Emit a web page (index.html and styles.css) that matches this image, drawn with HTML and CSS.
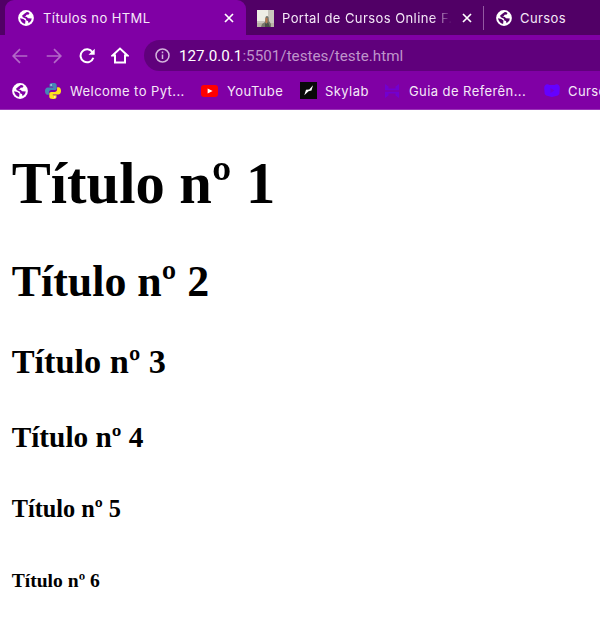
FILE: index.html
```
<!DOCTYPE html>
<html lang="pt-BR">
<head>
<meta charset="utf-8">
<title>Títulos no HTML</title>
<link rel="stylesheet" href="styles.css">
</head>
<body>
<svg class="defs" width="0" height="0" aria-hidden="true">
  <symbol id="globe" viewBox="0 0 16 16">
    <circle cx="8" cy="8" r="7.9" fill="#fff"/>
    <path d="M8.800 2.100Q10 1.900 11.500 2.900L10.800 4.500 8.600 4.700 7.800 6 6.300 6.300 8.800 6.900 10 8.200 13.800 8.400Q13.600 11.500 10.600 13.200L10 11 8.400 10.500 7.900 8.700 4.800 7.300 4 5.700 6.300 3.800zM2 8.300 5.300 8.900 7.500 10.600 7.100 13.900Q2.800 13 2 8.300z" fill="currentColor"/>
  </symbol>
</svg>
<header class="browser">
  <div class="tabs">
    <div class="edge"></div>
    <div class="tab active">
      <svg class="globe"><use href="#globe"/></svg>
      <span class="label title-one">Títulos no HTML</span>
      <svg class="close" viewBox="0 0 10 10"><path d="m1 1 8 8m0-8-8 8"/></svg>
    </div>
    <div class="tab portal">
      <svg class="photo" viewBox="0 0 17 17"><path fill="#c9c6bd" d="M0 0h17v17H0z"/><path fill="#eeeee5" d="M0 0h11v11H0z"/><path fill="#b9b3a6" d="M0 13h17v4H0z"/><path fill="#77766b" d="m4 17 1-3 3-2 .5-5q1.500-2 3 0l.5 4 2 3v3z"/><path fill="#b9794f" d="M8.500 8h2v5h-2z"/><path fill="#4a4e46" d="m8 13 1.500 1 1.500-2 2 5H8z"/></svg>
      <span class="label title-two">Portal de Cursos Online F.</span>
      <svg class="close" viewBox="0 0 10 10"><path d="m1 1 8 8m0-8-8 8"/></svg>
    </div>
    <div class="tab courses">
      <svg class="globe"><use href="#globe"/></svg>
      <span class="label title-three">Cursos</span>
    </div>
  </div>
  <div class="toolbar">
    <svg class="nav dim" viewBox="0 0 16 16"><path d="M15.3 8H1.3M8 1.2 1.2 8 8 14.8"/></svg>
    <svg class="nav dim forward" viewBox="0 0 16 16"><path d="M.7 8h14M8 1.2 14.8 8 8 14.8"/></svg>
    <svg class="nav reload" viewBox="0 0 16 16"><path d="M13.5 4.2A6.5 6.5 0 1 0 14.3 9.7"/><path class="solid" d="M15.7.7v6.1H9.5z"/></svg>
    <svg class="nav home" viewBox="0 0 18 17"><path d="M1.5 8.4 9 1.6l7.5 6.8H14V15.6H4V8.4z"/></svg>
    <div class="address">
      <svg class="info" viewBox="0 0 15 15"><circle cx="7.5" cy="7.5" r="6.5"/><path d="M7.5 6.6v4.5M7.5 3.6v1.6"/></svg>
      <span class="url"><span class="host">127.0.0.1</span>:5501/testes/teste.html</span>
    </div>
  </div>
  <nav class="bookmarks">
    <svg class="globe"><use href="#globe"/></svg>
    <svg class="python" viewBox="0 0 16 16"><path fill="#4587b6" d="M8 0C4.5 0 4.5 1.3 4.5 2.2v1.5H8.2v.7H3C.8 4.4 0 6.2 0 8c0 2.3 1 3.7 2.5 3.7h1.4V9.4c0-1.5 1.2-2.4 2.4-2.4h3.5c1.2 0 1.9-.8 1.9-1.8v-3C11.7.6 10.4 0 8 0z"/><path fill="#ffe21b" d="M8 16c3.5 0 3.5-1.3 3.5-2.2v-1.5H7.8v-.7H13c2.2 0 3-1.8 3-3.6 0-2.3-1-3.7-2.5-3.7h-1.4v2.3c0 1.5-1.2 2.4-2.4 2.4H6.2c-1.2 0-1.9.8-1.9 1.8v3C4.3 15.4 5.6 16 8 16z"/><circle cx="6.1" cy="2" r=".7" fill="#fff"/><circle cx="9.8" cy="14" r=".7" fill="#fff"/></svg>
    <span class="label mark-python">Welcome to Pyt...</span>
    <svg class="youtube" viewBox="0 0 17 12"><rect width="17" height="12" rx="3" fill="#f00"/><path fill="#fff" d="m6.6 3.4 5 2.6-5 2.6z"/></svg>
    <span class="label mark-youtube">YouTube</span>
    <svg class="skylab" viewBox="0 0 17 17"><path fill="#090909" d="M0 0h17v17H0z"/><path fill="#fff" d="m4.300 13.300 1.700-5.500 3.200-.3 3.800-4.200-1.500 5.200-3 .8z"/></svg>
    <span class="label mark-skylab">Skylab</span>
    <svg class="guide" viewBox="0 0 14 14"><path d="M0 0l3.500 2.500V4.500h7V2.500L14 0v6.300H0zM0 14l3.500-2.500V9.500h7v2L14 14V7.700H0z"/></svg>
    <span class="label mark-guide">Guia de Referên...</span>
    <svg class="course-icon" viewBox="0 0 16 13"><path fill="#6500ff" d="M2 .5Q4 0 5.500 1h5Q12 0 14 .5 16 1.500 15.800 4L15.300 10Q14.500 12 11 12.300L8 13l-3-.7Q1.500 12 .7 10L.2 4Q0 1.500 2 .5z"/><path fill="#7300d0" d="m6.500 4 4 2.500-4 2.500z"/></svg>
    <span class="label mark-course">Cursos</span>
  </nav>
</header>
<main>
  <h1>Título nº 1</h1>
  <h2>Título nº 2</h2>
  <h3>Título nº 3</h3>
  <h4>Título nº 4</h4>
  <h5>Título nº 5</h5>
  <h6>Título nº 6</h6>
</main>
</body>
</html>
```

FILE: styles.css
```
* { box-sizing: border-box; }
body { margin: 0; width: 600px; height: 626px; overflow: hidden; background: #fff; }
svg { display: block; flex: none; }
.defs { position: absolute; }
.browser { height: 110px; overflow: hidden; background: #8000a5; color: #f5e8f8; font-family: Inter, sans-serif; font-size: 13px; letter-spacing: .42px; border-bottom: 1px solid #9a35b8; }
.tabs { display: flex; height: 36px; background: #510066; box-shadow: inset 0 -1px #8000a5; }
.edge { width: 5px; height: 35px; border-bottom-right-radius: 5px; background: #510066; }
.tab { display: flex; align-items: center; height: 36px; flex: none; }
.active { width: 241px; padding-left: 13px; background: #8000a5; border-radius: 9px 9px 0 0; }
.portal { width: 237px; height: 35px; padding: 1px 0 0 11px; background: #510066; border-bottom-left-radius: 8px; }
.photo { width: 17px; height: 17px; }
.courses { height: 24px; margin-top: 6px; border-left: 1px solid #9359a1; padding-left: 12px; }
.globe { width: 16px; height: 16px; color: #8000a5; }
.courses .globe { color: #510066; }
.label { display: block; white-space: nowrap; line-height: 18px; flex: none; }
.title-one { width: 180px; margin-left: 9px; }
.active .close { margin-left: 1px; }
.title-two { width: 170px; margin-left: 8px; overflow: hidden; mask-image: linear-gradient(90deg, #000 88%, transparent); }
.title-three { margin-left: 8px; }
.close { width: 10px; height: 10px; }
.portal .close { margin-left: 10px; }
.close path { fill: none; stroke: #fff; stroke-width: 1.7; }
.toolbar { display: flex; align-items: center; height: 40px; padding: 0 0 1px 12px; }
.nav { width: 16px; height: 16px; fill: none; stroke: #fff; stroke-width: 2; }
.dim { stroke: #b368c8; stroke-width: 1.7; }
.forward { margin-left: 18px; }
.reload { margin-left: 17px; }
.nav .solid { fill: #fff; stroke: none; }
.home { width: 18px; height: 17px; margin-left: 16px; }
.address { display: flex; align-items: center; width: 480px; height: 31px; margin-left: 15px; padding-left: 11px; flex: none; border-radius: 16px; background: #60007c; }
.info { width: 15px; height: 15px; fill: none; stroke: #d3b5dc; stroke-width: 1.5; }
.url { margin-left: 9px; font: 15.2px/20px Roboto, sans-serif; letter-spacing: .02px; color: #bf94cb; white-space: nowrap; }
.host { color: #fff; }
.bookmarks { display: flex; align-items: center; height: 29px; padding-left: 12px; }
.python { width: 16px; height: 16px; margin-left: 17px; }
.mark-python { width: 131px; margin-left: 9px; }
.youtube { width: 17px; height: 12px; }
.mark-youtube { width: 73px; margin-left: 9px; }
.skylab { width: 17px; height: 17px; }
.mark-skylab { width: 60px; margin-left: 8px; }
.guide { width: 14px; height: 14px; fill: #7200d0; }
.mark-guide { width: 135px; margin-left: 10px; }
.course-icon { width: 16px; height: 13px; }
.mark-course { margin-left: 8px; }
main { padding: 40px 11.7px 0; font: 29.2px "Liberation Serif", serif; color: #000; }
h1, h2, h3, h4, h5, h6 { font-weight: 700; }
h1 { margin: 0 0 39px; font-size: 58.6px; line-height: 67px; }
h2 { margin: 0 0 36px; font-size: 43.9px; line-height: 50px; }
h3 { margin: 0 0 40px; font-size: 34.3px; line-height: 39px; }
h4 { margin: 0 0 41px; font-size: 29.3px; line-height: 33px; }
h5 { margin: 0 0 47px; font-size: 24.3px; line-height: 28px; }
h6 { margin: 0; font-size: 19.6px; line-height: 22px; }
```
